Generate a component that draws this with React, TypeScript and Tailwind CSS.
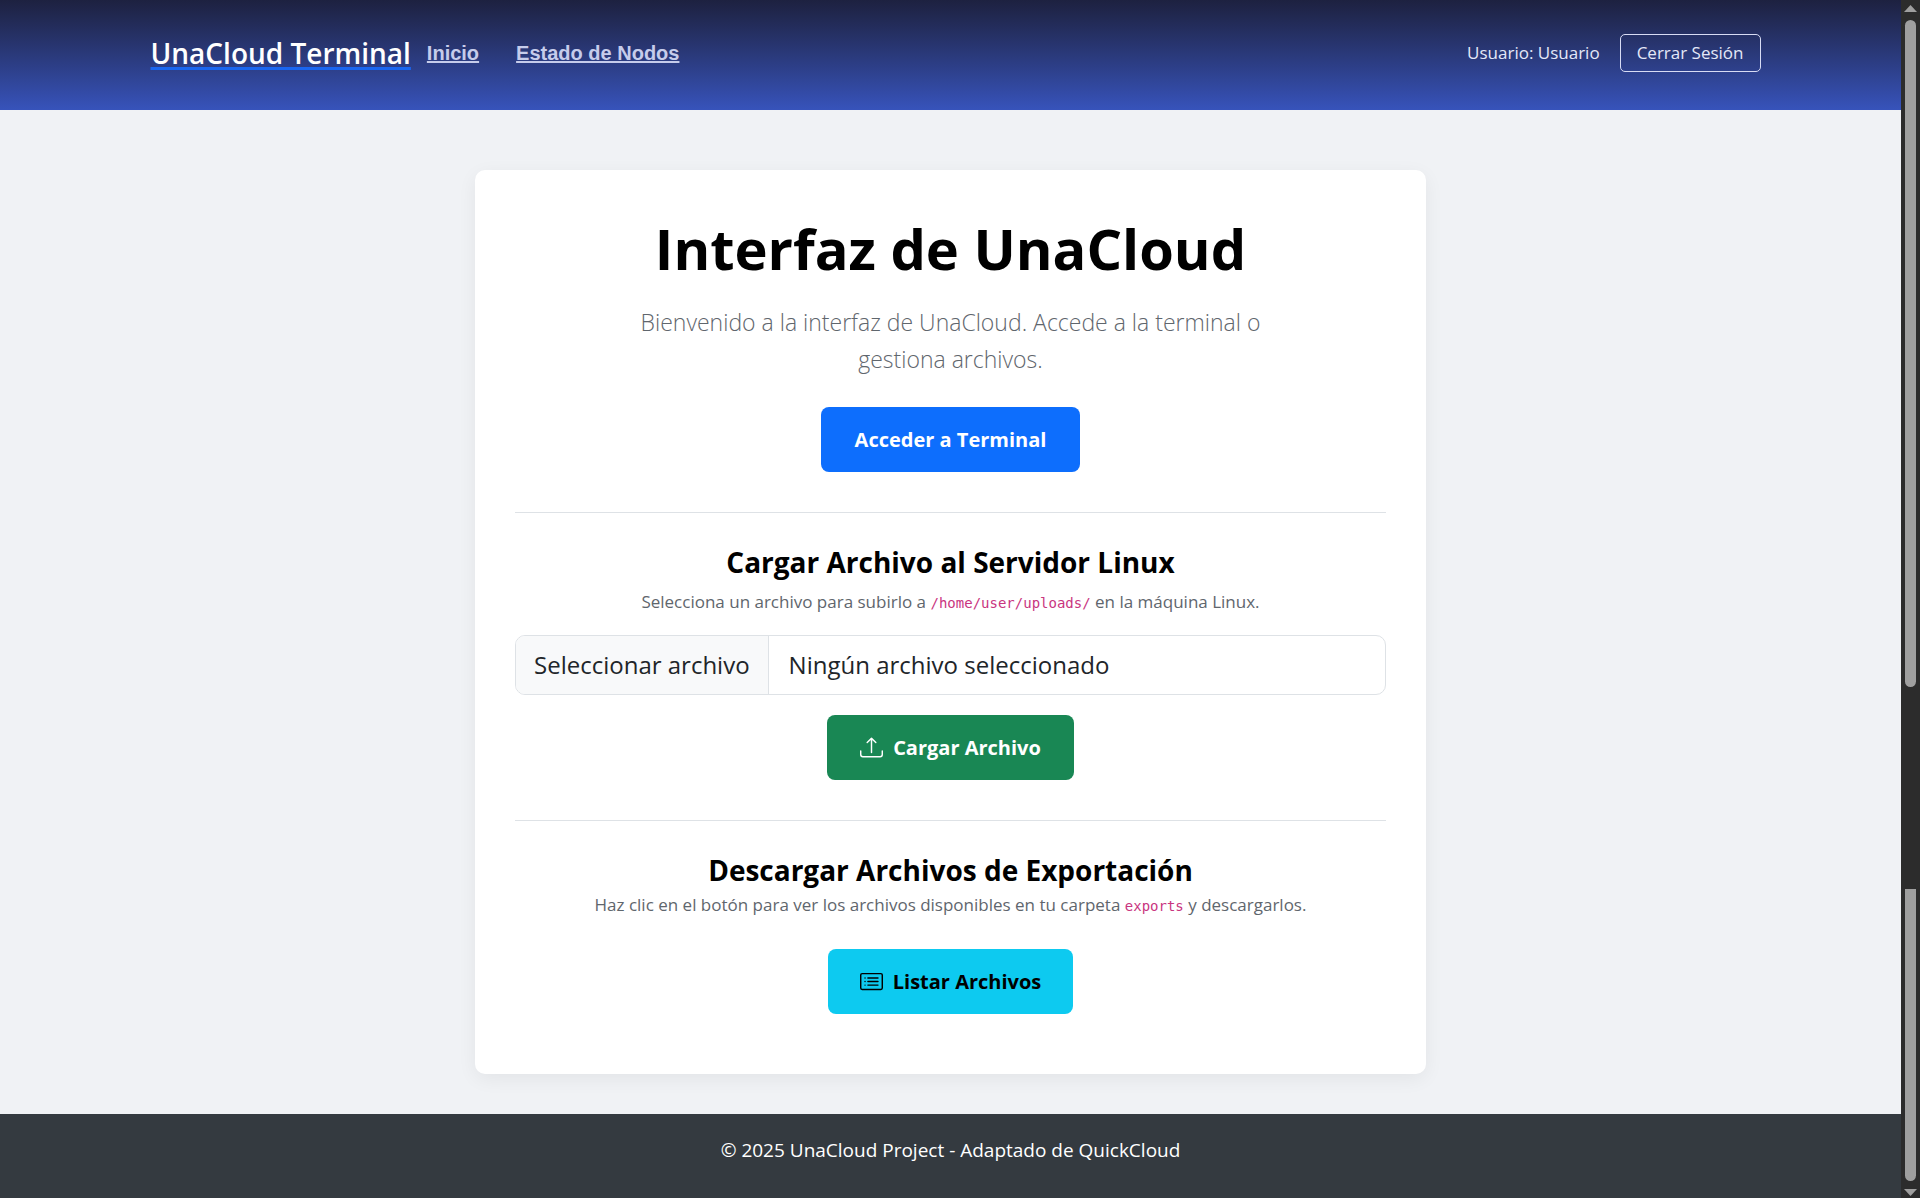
import { useRef, useState } from "react";
import { BsCardList, BsUpload } from "react-icons/bs";

const actionClass =
  "inline-flex h-[65px] items-center justify-center gap-2.5 rounded-lg text-xl font-bold";

function Header() {
  return (
    <header className="bg-linear-to-b from-[#1d2140] to-[#3753bb] pt-[34px] pb-[38px] text-white">
      <div className="mx-auto flex h-[38px] max-w-[1650px] items-center pr-[15px] pl-[25px]">
        <a
          href="#"
          className="mr-4 text-[28px] leading-10 font-semibold underline decoration-[#1a66f0] decoration-3 underline-offset-3"
        >
          UnaCloud Terminal
        </a>
        <nav className="flex items-center gap-[37px] font-['Liberation_Sans',sans-serif] text-xl font-bold text-[#c6cceb]">
          <a href="#inicio" className="underline decoration-2">
            Inicio
          </a>
          <a href="#nodos" className="underline decoration-2">
            Estado de Nodos
          </a>
        </nav>
        <div className="ml-auto flex items-center gap-5 text-[17px] text-[#e4e8f8]">
          <span>Usuario: Usuario</span>
          <button
            type="button"
            className="h-[38px] rounded-[5px] border border-[#d8dcf4] px-4"
          >
            Cerrar Sesión
          </button>
        </div>
      </div>
    </header>
  );
}

function Code({ children }: { children: string }) {
  return (
    <code className="font-['DejaVu_Sans_Mono',monospace] text-[14px] text-[#c9357f]">
      {children}
    </code>
  );
}

function FilePicker() {
  const input = useRef<HTMLInputElement>(null);
  const [name, setName] = useState("Ningún archivo seleccionado");
  return (
    <div className="flex h-[60px] overflow-hidden rounded-[10px] border border-[#dee2e6] bg-white text-2xl text-[#212529]">
      <button
        type="button"
        onClick={() => input.current?.click()}
        className="border-r border-[#dee2e6] bg-[#f8f9fa] px-[18px]"
      >
        Seleccionar archivo
      </button>
      <label htmlFor="archivo" className="flex flex-1 items-center px-5">
        {name}
      </label>
      <input
        ref={input}
        id="archivo"
        type="file"
        className="hidden"
        onChange={(e) => setName(e.target.files?.[0]?.name ?? name)}
      />
    </div>
  );
}

function Scrollbar() {
  return (
    <div
      aria-hidden="true"
      className="flex w-[19px] shrink-0 flex-col items-center bg-[#2c2c2c] px-1"
    >
      <svg viewBox="0 0 13 20" className="h-5 w-[13px] shrink-0 fill-[#9f9f9f]">
        <path d="M0 12 L6.500 5 L13 12 Z" />
      </svg>
      <div className="w-[11px] flex-[666] rounded-full bg-[#9f9f9f]" />
      <div className="flex-[202]" />
      <div className="w-[11px] flex-[292] rounded-b-full bg-[#9f9f9f]" />
      <svg viewBox="0 0 13 18" className="h-[18px] w-[13px] shrink-0 fill-[#9f9f9f]">
        <path d="M0 8 L6.500 15 L13 8 Z" />
      </svg>
    </div>
  );
}

export default function App() {
  return (
    <div className="flex min-h-screen font-['Open_Sans',sans-serif]">
      <div className="flex min-w-0 flex-1 flex-col bg-[#f0f2f5]">
        <Header />
        <main className="px-4 pt-[60px] pb-10">
          <section className="mx-auto max-w-[951px] rounded-[10px] bg-white px-10 pt-[38px] pb-[60px] text-center text-black shadow-[0_5px_19px_rgba(0,0,0,0.06)]">
            <h1 className="text-[56px] leading-20 font-bold">Interfaz de UnaCloud</h1>
            <p className="mx-auto mt-4 max-w-[654px] text-[23px] leading-[37px] font-light text-[#5f666d]">
              Bienvenido a la interfaz de UnaCloud. Accede a la terminal o gestiona
              archivos.
            </p>
            <button
              type="button"
              className={`${actionClass} mt-[29px] min-w-[259px] bg-[#0d6efd] text-white`}
            >
              Acceder a Terminal
            </button>

            <div className="mt-10 border-t border-[#dee2e6] pt-[29px]">
              <h2 className="text-[28px] leading-10 font-bold">
                Cargar Archivo al Servidor Linux
              </h2>
              <p className="mt-[5px] mb-[17px] text-[17px] leading-[29px] text-[#5f666d]">
                Selecciona un archivo para subirlo a <Code>/home/user/uploads/</Code> en
                la máquina Linux.
              </p>
              <FilePicker />
              <button
                type="submit"
                className={`${actionClass} mt-5 min-w-[247px] bg-[#198754] text-white`}
              >
                <BsUpload className="size-[23px]" />
                Cargar Archivo
              </button>
            </div>

            <div className="mt-10 border-t border-[#dee2e6] pt-[29px]">
              <h2 className="text-[28px] leading-10 font-bold">
                Descargar Archivos de Exportación
              </h2>
              <p className="mb-[28px] text-[17px] leading-[29px] text-[#5f666d]">
                Haz clic en el botón para ver los archivos disponibles en tu carpeta{" "}
                <Code>exports</Code> y descargarlos.
              </p>
              <button
                type="button"
                className={`${actionClass} min-w-[245px] bg-[#0dcaf0] text-black`}
              >
                <BsCardList className="size-[23px]" />
                Listar Archivos
              </button>
            </div>
          </section>
        </main>
        <footer className="flex-1 bg-[#343a40] pt-[21px] pb-[34px] text-center text-[19px] leading-[30px] text-white">
          © 2025 UnaCloud Project - Adaptado de QuickCloud
        </footer>
      </div>
      <Scrollbar />
    </div>
  );
}
